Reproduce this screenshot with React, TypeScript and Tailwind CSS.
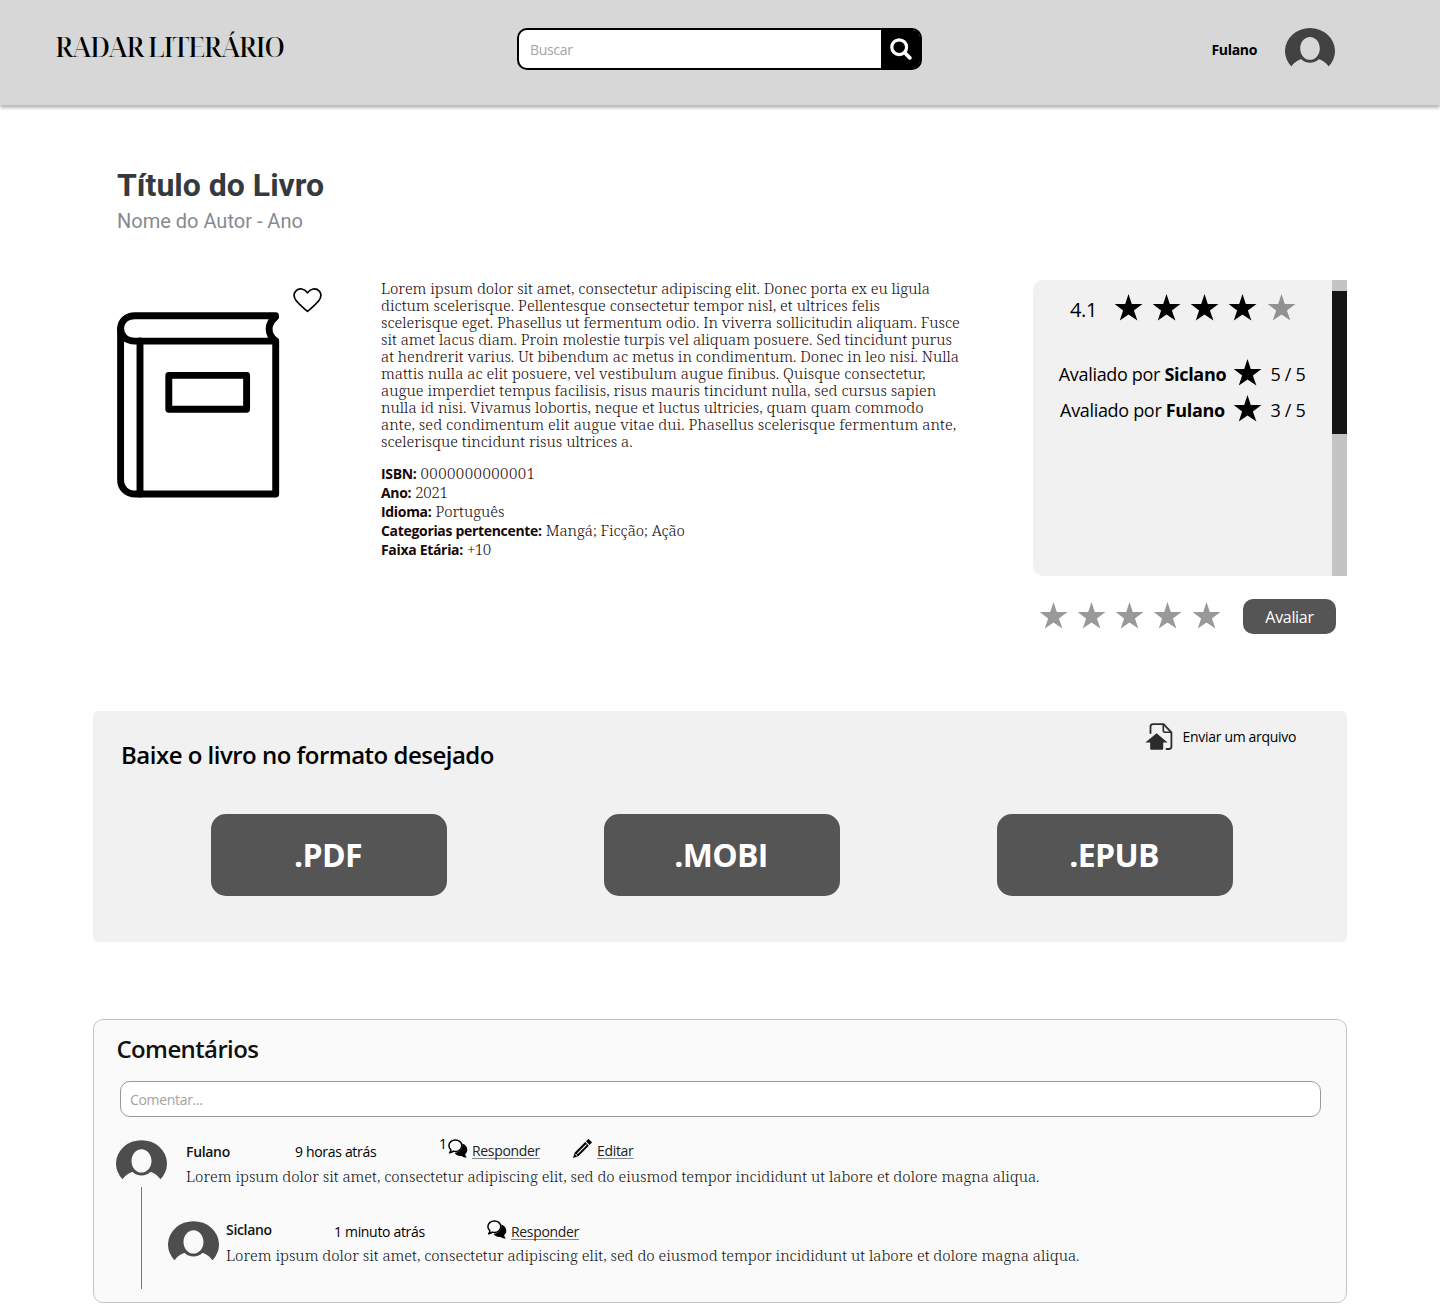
import type { ReactNode } from 'react';

const SERIF = "font-['Noto_Serif','Liberation_Serif',serif] font-light";

function Star({ className = 'text-black' }: { className?: string }) {
  return (
    <svg viewBox="0 0 28 27" className={`h-[27px] w-7 shrink-0 ${className}`} fill="currentColor">
      <path d="M13.5 0 16.8 10.1H27.5L18.9 16.4 22.4 26.6 13.5 20.4 4.8 26.6 8.1 16.4-.3 10.1H10.2Z" />
    </svg>
  );
}

function Avatar({ className }: { className: string }) {
  return (
    <svg viewBox="0 0 50 39" className={`shrink-0 ${className}`} fill="currentColor">
      <path
        fillRule="evenodd"
        d="M6.4 38.4A25 23 0 1 1 43.6 38.4C41.6 35.6 37.4 31.7 33.6 31.3 30 35.8 20 35.8 16.4 31.3 12.6 31.7 8.4 35.6 6.4 38.4ZM25 9C19.5 9 15.2 14.2 15.2 20.4S19.5 31.8 25 31.8 34.8 26.6 34.8 20.4 30.5 9 25 9Z"
      />
    </svg>
  );
}

function Bubbles() {
  return (
    <svg viewBox="0 0 20 19" className="h-[19px] w-5 shrink-0" fill="none">
      <path d="M14.2 4.6C17.5 5.8 19.3 8.2 19.3 10.7 19.3 12.6 18.4 14 17.2 15.1 17.2 16.5 17.9 17.4 19 18.6 16.8 18.5 15 17.8 13.7 16.9 10.9 17.3 8.1 16.2 6.6 14 11.5 13.4 15.2 10 14.2 4.6Z" fill="black" />
      <path d="M7.4 1C11 1 13.8 3.4 13.8 6.6S11 12.4 7.4 12.4C6.7 12.4 6 12.3 5.4 12.1 4.4 13 3 13.6 1.6 13.7 2.5 12.7 3 11.7 2.9 10.7 1.6 9.6 .9 8.2 .9 6.6 .9 3.4 3.8 1 7.4 1Z" stroke="black" strokeWidth="1.5" strokeLinejoin="round" />
    </svg>
  );
}

function Pencil() {
  return (
    <svg viewBox="0 0 19 19" className="h-[19px] w-[19px] shrink-0">
      <path d="M13 2.2 15.1.3Q15.6-.1 16.1.4L18.5 2.8Q19 3.4 18.5 3.9L16.6 5.9ZM12.2 3.1 15.8 6.8 5.6 17 0 19 1.8 13.4Z" fill="black" />
      <path d="M13.4 5.6 4.4 14.7" stroke="#fafafa" strokeWidth="1.2" />
      <path d="m2.7 14.4 2 2-1.3.4-1.1-1.1Z" fill="#fafafa" />
    </svg>
  );
}

function UploadFile() {
  return (
    <svg viewBox="0 0 28 28" className="h-7 w-7 shrink-0" fill="none">
      <path d="M5.5 10V3.7C5.5 2.1 6.4 1.2 8 1.2H18.5L26.4 9.3V23.5C26.4 25.2 25.5 26 23.9 26H21.5" stroke="#2b2b2b" strokeWidth="1.8" strokeLinecap="round" />
      <path d="M18.3 1.5V7.3C18.3 8.6 19 9.3 20.3 9.3H26.2" stroke="#2b2b2b" strokeWidth="1.6" />
      <path d="M11.6 10.3 22.6 19.5H18.2V25.8Q18.2 26.8 17.2 26.8H6.2Q5.2 26.8 5.2 25.8V19.5H.3Z" fill="#2b2b2b" />
    </svg>
  );
}

function Book() {
  return (
    <svg viewBox="116 311 165 188" className="h-[188px] w-[165px]" fill="none" stroke="black" strokeWidth="6.9" strokeLinejoin="round" strokeLinecap="round">
      <path d="M275.5 315.8H135C126 315.8 120.6 321.5 120.6 328.6S126 341.1 135 341.1H275.5C267 334 267 324 275.5 317" />
      <path d="M120.6 329V480C120.6 488.5 127 494 135.5 494H275.7V341" />
      <path d="M140 341V494" />
      <path d="M168.8 375.4H246.6V409.2H168.8Z" />
    </svg>
  );
}

const SUMMARY = [
  ['Lorem ipsum dolor sit amet, consectetur adipiscing elit. Donec porta ex eu ligula', 'tracking-[-0.03px]'],
  ['dictum scelerisque. Pellentesque consectetur tempor nisl, et ultrices felis', 'tracking-[0.04px]'],
  ['scelerisque eget. Phasellus ut fermentum odio. In viverra sollicitudin aliquam. Fusce', 'tracking-normal'],
  ['sit amet lacus diam. Proin molestie turpis vel aliquam posuere. Sed tincidunt purus', 'tracking-normal'],
  ['at hendrerit varius. Ut bibendum ac metus in condimentum. Donec in leo nisi. Nulla', 'tracking-normal'],
  ['mattis nulla ac elit posuere, vel vestibulum augue finibus. Quisque consectetur,', 'tracking-[0.035px]'],
  ['augue imperdiet tempus facilisis, risus mauris tincidunt nulla, sed cursus sapien', 'tracking-[0.045px]'],
  ['nulla id nisi. Vivamus lobortis, neque et luctus ultricies, quam quam commodo', 'tracking-[0.025px]'],
  ['ante, sed condimentum elit augue vitae dui. Phasellus scelerisque fermentum ante,', 'tracking-[0.07px]'],
  ['scelerisque tincidunt risus ultrices a.', 'tracking-[0.02px]'],
];

const DETAILS = [
  ['ISBN:', '0000000000001', 'tracking-[0.45px]'],
  ['Ano:', '2021', 'tracking-[-0.3px]'],
  ['Idioma:', 'Português', 'tracking-normal'],
  ['Categorias pertencente:', 'Mangá; Ficção; Ação', 'tracking-[-0.05px]'],
  ['Faixa Etária:', '+10', 'tracking-[-0.5px]'],
];

const COMMENT =
  'Lorem ipsum dolor sit amet, consectetur adipiscing elit, sed do eiusmod tempor incididunt ut labore et dolore magna aliqua.';

function Action({ children }: { children: ReactNode }) {
  return (
    <a className="text-sm text-[#222] underline decoration-[#888] decoration-1 underline-offset-2 [text-decoration-skip-ink:none]">
      {children}
    </a>
  );
}

export default function App() {
  return (
    <div className="h-[1313px] w-[1440px] overflow-hidden bg-white font-['Open_Sans','Noto_Sans',sans-serif] tracking-[-0.02em] whitespace-nowrap text-black">
      <header className="flex h-[105px] bg-[#d7d7d7] pt-7 shadow-[0_3px_3px_0_rgba(0,0,0,0.28)]">
        <div className="ml-[55px] w-[462px] pt-[1px] font-['Noto_Serif_Display','Liberation_Serif',serif] text-[27px] leading-9 font-medium tracking-[-0.047em]">
          RADAR LITERÁRIO
        </div>
        <div className="flex h-[42px] w-[405px] rounded-[10px] border-2 border-black bg-white">
          <span className="flex-1 pl-[11px] text-sm leading-[39px] text-[#a3a3a3]">Buscar</span>
          <span className="flex w-[39px] items-center justify-center rounded-r-[7px] bg-black">
            <svg viewBox="0 0 22 22" className="h-[22px] w-[22px]" fill="none" stroke="white" strokeLinecap="round">
              <circle cx="9.2" cy="9.2" r="7.4" strokeWidth="3.2" />
              <path d="m15 15 4.8 4.8" strokeWidth="3.8" />
            </svg>
          </span>
        </div>
        <span className="ml-[289.5px] w-[73.5px] pt-3 text-sm leading-5 font-bold">Fulano</span>
        <Avatar className="h-[39px] w-[50px] text-[#424242]" />
      </header>

      <section className="mt-[61px] ml-[117px] font-['Roboto',sans-serif] tracking-normal">
        <h1 className="text-[32px] leading-[38px] font-bold text-[#343a40]">Título do Livro</h1>
        <p className="mt-[5px] text-xl leading-6 text-[#868a91]">Nome do Autor - Ano</p>
      </section>

      <section className="mt-[47px] ml-[116px] flex h-[431px]">
        <div className="flex w-[265px] items-start">
          <div className="pt-[31px]">
            <Book />
          </div>
          <svg viewBox="0 0 30 26" className="mt-[7px] ml-[11.5px] h-[26px] w-[29px]" fill="none" stroke="black" strokeWidth="1.7" strokeLinejoin="round">
            <path d="M15 24.8C11 21.3 6.2 17.5 3.2 13.5 .8 10.3.6 6.5 2.8 3.8 6.5-.1 12.4 1.3 15 5.6 17.6 1.3 23.5-.1 27.2 3.8 29.4 6.5 29.2 10.3 26.8 13.5 23.8 17.5 19 21.3 15 24.8Z" />
          </svg>
        </div>

        <div className="w-[652px] text-[#180808]">
          <div className={`${SERIF} text-[15px] leading-[17px]`}>
            {SUMMARY.map(([line, tracking]) => (
              <p key={line} className={tracking}>
                {line}
              </p>
            ))}
          </div>
          <dl className="mt-[14px]">
            {DETAILS.map(([label, value, tracking]) => (
              <div key={label} className="flex gap-1 text-sm leading-[19px]">
                <dt className="font-bold">{label}</dt>
                <dd className={`${SERIF} text-[15px] ${tracking}`}>{value}</dd>
              </div>
            ))}
          </dl>
        </div>

        <aside className="w-[314px]">
          <div className="flex h-[296px] overflow-hidden rounded-l-[10px] bg-[#f1f1f1]">
            <div className="w-[299px]">
              <div className="mt-3.5 flex gap-2.5 pl-[37px]">
                <span className="w-[34.5px] pt-[2px] text-xl leading-[27px]">4.1</span>
                <Star />
                <Star />
                <Star />
                <Star />
                <Star className="ml-[1px] text-[#919191]" />
              </div>
              {[
                ['Siclano', '5 / 5'],
                ['Fulano', '3 / 5'],
              ].map(([name, score], i) => (
                <div key={name} className={`flex text-lg leading-[27px] ${i === 0 ? 'mt-[36px]' : 'mt-[7px]'}`}>
                  <span className="w-[200.5px] pt-[2px] pl-[23px]">
                    <span className="inline-block w-[173px] text-center">
                      Avaliado por <b>{name}</b>
                    </span>
                  </span>
                  <Star />
                  <span className="pt-[2px] pl-[9px]">{score}</span>
                </div>
              ))}
            </div>
            <div className="w-[15px] bg-[#c4c4c4] pt-[11px]">
              <div className="h-[143px] bg-[#151515]" />
            </div>
          </div>
          <div className="mt-[23px] flex pl-[7px]">
            <div className="flex gap-2.5 pt-[3px] text-[#999]">
              <Star className="" />
              <Star className="" />
              <Star className="" />
              <Star className="" />
              <Star className="ml-[1px]" />
            </div>
            <button className="ml-[22px] h-[35px] w-[93px] rounded-[10px] bg-[#555] text-base tracking-[-0.02em] text-white">Avaliar</button>
          </div>
        </aside>
      </section>

      <section className="mx-[93px] h-[231px] rounded-[5px] bg-[#f1f1f1] pt-3">
        <div className="flex justify-between pr-[51px] pl-7">
          <h2 className="pt-4 text-2xl leading-8 font-semibold tracking-[-0.021em]">Baixe o livro no formato desejado</h2>
          <div className="flex gap-2.5 text-sm leading-7">
            <UploadFile />
            <span>Enviar um arquivo</span>
          </div>
        </div>
        <div className="mt-[43px] flex gap-[157px] pl-[118px]">
          {['.PDF', '.MOBI', '.EPUB'].map((format) => (
            <button key={format} className="h-[82px] w-[236px] rounded-[15px] bg-[#555] pr-[2px] text-[32px] font-bold tracking-[-0.02em] text-white">
              {format}
            </button>
          ))}
        </div>
      </section>

      <section className="mx-[93px] mt-[77px] h-[284px] rounded-[10px] border border-[#c4c4c4] bg-[#fafafa] pl-[22px]">
        <h2 className="pt-[13px] pl-[0.5px] text-2xl leading-8 font-semibold tracking-[-0.026em] text-[#111]">Comentários</h2>
        <div className="mt-4 ml-[3.5px] h-9 w-[1201px] rounded-[10px] border border-[#999] bg-white pl-[9.5px] text-sm leading-[35px] text-[#a3a3a3]">
          Comentar...
        </div>
        <div className="mt-[22px] flex">
          <div className="w-[51px] pt-px">
            <Avatar className="h-10 w-[51px] text-[#4d4d4d]" />
            <div className="mt-[7px] ml-[25px] h-[102px] w-px bg-[#777]" />
          </div>
          <div>
            <div className="pl-[19px]">
              <div className="flex text-sm leading-[19px]">
                <span className="w-[109px] pt-[3px] font-semibold text-[#111]">Fulano</span>
                <span className="w-36 pt-[3px]">9 horas atrás</span>
                <span className="w-[9px] -translate-y-[5px]">1</span>
                <Bubbles />
                <span className="w-[105px] pt-[2px] pl-1">
                  <Action>Responder</Action>
                </span>
                <Pencil />
                <span className="pt-[2px] pl-[5px]">
                  <Action>Editar</Action>
                </span>
              </div>
              <p className={`${SERIF} mt-[6px] text-[15px] leading-[19px] tracking-normal text-[#111]`}>{COMMENT}</p>
            </div>
            <div className="mt-[34px] ml-[1px] flex">
              <Avatar className="mt-px h-10 w-[51px] text-[#4d4d4d]" />
              <div className="pl-[7px]">
                <div className="flex text-sm leading-[19px]">
                  <span className="w-[108px] font-semibold text-[#111]">Siclano</span>
                  <span className="w-[153px] pt-[2px]">1 minuto atrás</span>
                  <Bubbles />
                  <span className="pt-[2px] pl-[4px]">
                    <Action>Responder</Action>
                  </span>
                </div>
                <p className={`${SERIF} mt-1 text-[15px] leading-[19px] tracking-normal text-[#111]`}>{COMMENT}</p>
              </div>
            </div>
          </div>
        </div>
      </section>
    </div>
  );
}
